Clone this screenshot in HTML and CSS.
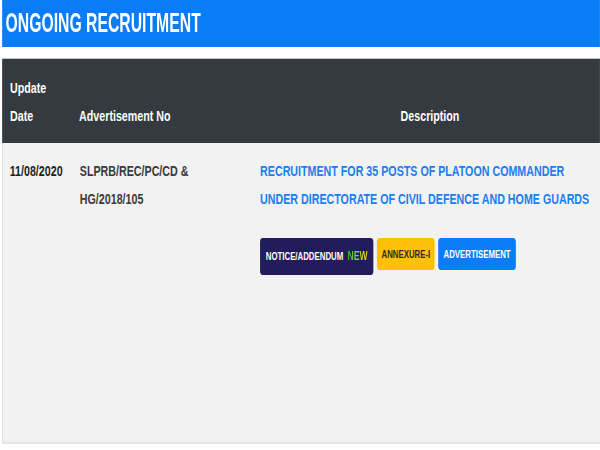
FILE: index.html
```html
<!DOCTYPE html>
<html>
<head>
<meta charset="utf-8">
<link rel="stylesheet" href="styles.css">
</head>
<body>
<div class="page">
  <div class="banner"><h1 class="title">ONGOING RECRUITMENT</h1></div>
  <div class="grid">
    <div class="row head">
      <div class="cell">Update<br>Date</div>
      <div class="cell">Advertisement No</div>
      <div class="cell head-desc">Description</div>
    </div>
    <div class="row body">
      <div class="cell cell-date">11/08/2020</div>
      <div class="cell cell-adv">SLPRB/REC/PC/CD &amp;<br>HG/2018/105</div>
      <div class="cell">
        <a class="desc-link" href="#">RECRUITMENT FOR 35 POSTS OF PLATOON COMMANDER UNDER DIRECTORATE OF CIVIL DEFENCE AND HOME GUARDS</a>
        <div class="btns">
          <a class="btn btn-navy" href="#">NOTICE/ADDENDUM <span class="new">NEW</span></a>
          <a class="btn btn-yellow" href="#">ANNEXURE-I</a>
          <a class="btn btn-blue" href="#">ADVERTISEMENT</a>
        </div>
      </div>
    </div>
  </div>
</div>
</body>
</html>
```
FILE: styles.css
```css
html, body {
  margin: 0;
  padding: 0;
  background: #ffffff;
}
body {
  font-family: "Liberation Sans", Arial, sans-serif;
  font-weight: bold;
  overflow: hidden;
  width: 600px;
  height: 450px;
}
/* the source page is rendered horizontally condensed */
.page {
  width: 839px;
  padding-left: 3px;
  transform: scaleX(0.7125);
  transform-origin: left top;
}
.banner {
  background: #0b7cf7;
  height: 47px;
  margin-bottom: 11px;
  overflow: hidden;
}
.title {
  margin: 0;
  padding: 9px 0 0 6px;
  color: #ffffff;
  font-size: 28px;
  line-height: 28px;
  font-weight: bold;
  display: inline-block;
  transform: scaleX(0.79);
  transform-origin: left center;
  white-space: nowrap;
}
.grid {
  border-top: 1px solid #c9c0c6;
  font-size: 15px;
  line-height: 28px;
}
.row {
  display: grid;
  grid-template-columns: 97px 253px 489px;
}
.cell {
  padding: 0 11px;
}
.head {
  background: #343a40;
  color: #ffffff;
  align-items: end;
  padding: 15px 0 13px 0;
}
.head-desc {
  text-align: center;
  padding-left: 23px;
}
.body {
  background: #f2f2f2;
  color: #333333;
  align-items: start;
  padding: 14px 0 0 0;
  height: 285px;
  border-left: 1.4px solid #dcdcdc;
  border-bottom: 2px solid #e6e6e6;
}
.body .cell-date {
  color: #1e1e1e;
  padding-left: 9.6px;
}
.cell-adv { color: #3a3a3a; }
.desc-link {
  color: #1b7ef2;
  text-decoration: none;
  display: block;
}
.btns {
  display: flex;
  align-items: flex-start;
  gap: 5.6px;
  margin-top: 25px;
  line-height: 14px;
}
.btn {
  display: block;
  font-size: 11px;
  line-height: 14px;
  text-decoration: none;
  border-radius: 4px;
  white-space: nowrap;
}
.btn-navy {
  background: #221c5c;
  color: #ffffff;
  padding: 11px 8px 12px 8px;
}
.btn-yellow {
  background: #ffc107;
  color: #2a2a2a;
  padding: 9px 6px;
}
.btn-blue {
  background: #0b7cf7;
  color: #ffffff;
  padding: 9px 7px;
}
.new {
  background: linear-gradient(90deg, #19c930 0%, #7fe023 45%, #ffd21c 100%);
  -webkit-background-clip: text;
  background-clip: text;
  color: transparent;
  font-size: 12px;
  margin-left: 3px;
}
```
